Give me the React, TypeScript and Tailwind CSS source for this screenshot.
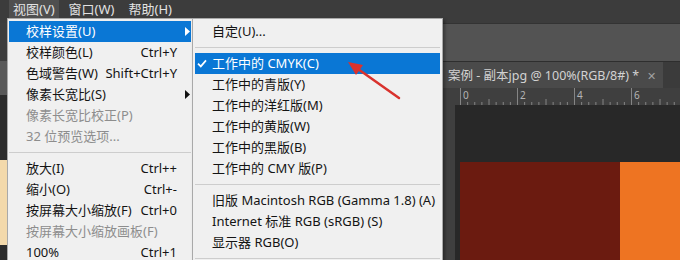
import React from 'react';
import clsx from 'clsx';

type Item = {
  label?: string;
  shortcut?: string;
  sub?: boolean;
  disabled?: boolean;
  active?: boolean;
  checked?: boolean;
  sep?: boolean;
};

const viewMenu: Item[] = [
  { label: '校样设置(U)', sub: true, active: true },
  { label: '校样颜色(L)', shortcut: 'Ctrl+Y' },
  { label: '色域警告(W)', shortcut: 'Shift+Ctrl+Y' },
  { label: '像素长宽比(S)', sub: true },
  { label: '像素长宽比校正(P)', disabled: true },
  { label: '32 位预览选项...', disabled: true },
  { sep: true },
  { label: '放大(I)', shortcut: 'Ctrl++' },
  { label: '缩小(O)', shortcut: 'Ctrl+-' },
  { label: '按屏幕大小缩放(F)', shortcut: 'Ctrl+0' },
  { label: '按屏幕大小缩放画板(F)', disabled: true },
  { label: '100%', shortcut: 'Ctrl+1' },
];

const proofMenu: Item[] = [
  { label: '自定(U)...' },
  { sep: true },
  { label: '工作中的 CMYK(C)', active: true, checked: true },
  { label: '工作中的青版(Y)' },
  { label: '工作中的洋红版(M)' },
  { label: '工作中的黄版(W)' },
  { label: '工作中的黑版(B)' },
  { label: '工作中的 CMY 版(P)' },
  { sep: true },
  { label: '旧版 Macintosh RGB (Gamma 1.8) (A)' },
  { label: 'Internet 标准 RGB (sRGB) (S)' },
  { label: '显示器 RGB(O)' },
  { sep: true },
];

function MenuRow({ item }: { item: Item }) {
  if (item.sep) {
    return (
      <div className="flex h-[11px] items-center">
        <div className="h-px w-full bg-[#cdcdcd]" />
      </div>
    );
  }
  return (
    <div
      className={clsx(
        'relative flex h-[21px] items-center pl-[17px] whitespace-nowrap',
        item.active ? 'bg-[#0a77d5] text-white' : item.disabled ? 'text-[#8d8d8d]' : 'text-[#141414]'
      )}
    >
      {item.checked && (
        <svg className="absolute left-[2px] top-[6px]" width="10" height="9" viewBox="0 0 10 9">
          <path d="M1 4.6 L3.8 7.4 L9 1.4" fill="none" stroke="white" strokeWidth="1.7" />
        </svg>
      )}
      <span>{item.label}</span>
      {item.shortcut && <span className="ml-auto pr-[14px]">{item.shortcut}</span>}
      {item.sub && (
        <svg className="ml-auto mr-[1px]" width="5" height="9" viewBox="0 0 5 9">
          <path d="M0 0 L5 4.5 L0 9 Z" fill={item.active ? 'white' : '#111'} />
        </svg>
      )}
    </div>
  );
}

function Ruler() {
  // horizontal ruler ticks, 28.5px per unit
  const ticks = [];
  for (let i = 0; i < 36; i++) {
    const x = 5.5 + i * 7.125;
    const h = i % 8 === 0 ? 17 : i % 4 === 0 ? 6 : 3;
    ticks.push(<line key={i} x1={x} y1={17 - h} x2={x} y2={17} stroke="#858585" strokeWidth="1" />);
  }
  return (
    <svg width="225" height="17" className="block">
      {ticks}
      {['0', '2', '4', '6'].map((n, i) => (
        <text key={n} x={8 + i * 57} y={11} fontSize="10" fill="#b4b4b4" fontFamily="Noto Sans, sans-serif">
          {n}
        </text>
      ))}
    </svg>
  );
}

export default function App() {
  return (
    <div className="relative flex h-[260px] w-[680px] flex-col overflow-hidden bg-[#282828] font-['Noto_Sans','Noto_Sans_CJK_SC',sans-serif] text-[13px] leading-[21px]">
      {/* menubar */}
      <div className="flex h-[23px] shrink-0 items-start gap-[6px] bg-[#3c3c3c] pl-[9px] text-[#e2e2e2]">
        <div className="h-[18px] bg-[#4f4f4f] px-[4px] leading-[18px]">视图(V)</div>
        <div className="h-[18px] px-[4px] leading-[18px]">窗口(W)</div>
        <div className="h-[18px] px-[4px] leading-[18px]">帮助(H)</div>
      </div>

      <div className="flex flex-1">
        {/* left strip */}
        <div className="flex w-[7px] flex-col">
          <div className="h-[38px] bg-[#3d3d3d]" />
          <div className="h-[34px] bg-[#595959]" />
          <div className="h-[65px] bg-[#2c2c2c]" />
          <div className="h-[85px] bg-[#f3d9ab]" />
          <div className="flex-1 bg-[#2c2c2c]" />
        </div>

        {/* workspace */}
        <div className="flex flex-1 flex-col">
          <div className="h-[38px] border-t border-[#333] bg-[#535353]" />
          <div className="flex h-[27px] border-t border-[#2e2e2e] bg-[#3b3b3b]">
            <div className="ml-auto mr-[17px] flex w-[230px] items-center gap-[8px] overflow-hidden whitespace-nowrap bg-[#4a4a4a] pl-[15px] text-[12.5px] text-[#d2d2d2]">
              <span>案例 - 副本jpg @ 100%(RGB/8#) *</span>
              <span className="text-[11px] text-[#a0a0a0]">✕</span>
            </div>
          </div>
          <div className="flex h-[17px] bg-[#3f3f3f]">
            <div className="ml-auto">
              <Ruler />
            </div>
          </div>
          <div className="flex flex-1">
            <div className="ml-auto w-[12px] bg-[#3f3f3f]" />
            <div className="flex w-[225px] flex-col bg-[#282828] pl-[5px]">
              <div className="h-[57px]" />
              <div className="flex flex-1">
                <div className="w-[160px] bg-[#6b1b10]" />
                <div className="flex-1 bg-[#ee7422]" />
              </div>
            </div>
          </div>
        </div>
      </div>

      {/* 视图 dropdown */}
      <div className="absolute left-[7px] top-[18px] w-[186px] border border-[#a9a9a9] bg-[#f0f0f0] px-px pt-[2px]">
        {viewMenu.map((item, i) => (
          <MenuRow key={i} item={item} />
        ))}
      </div>

      {/* 校样设置 submenu */}
      <div className="absolute left-[192px] top-[18px] w-[251px] border border-[#a9a9a9] bg-[#f0f0f0] p-[2px] shadow-[2px_2px_3px_rgba(0,0,0,0.35)]">
        {proofMenu.map((item, i) => (
          <MenuRow key={i} item={item} />
        ))}
      </div>

      {/* red arrow annotation */}
      <svg className="pointer-events-none absolute left-0 top-0" width="680" height="260">
        <line x1="399" y1="98" x2="358" y2="69" stroke="#d9322d" strokeWidth="2.5" strokeLinecap="round" />
        <polygon points="348,62 363,65 356,75" fill="#d9322d" />
      </svg>
    </div>
  );
}
